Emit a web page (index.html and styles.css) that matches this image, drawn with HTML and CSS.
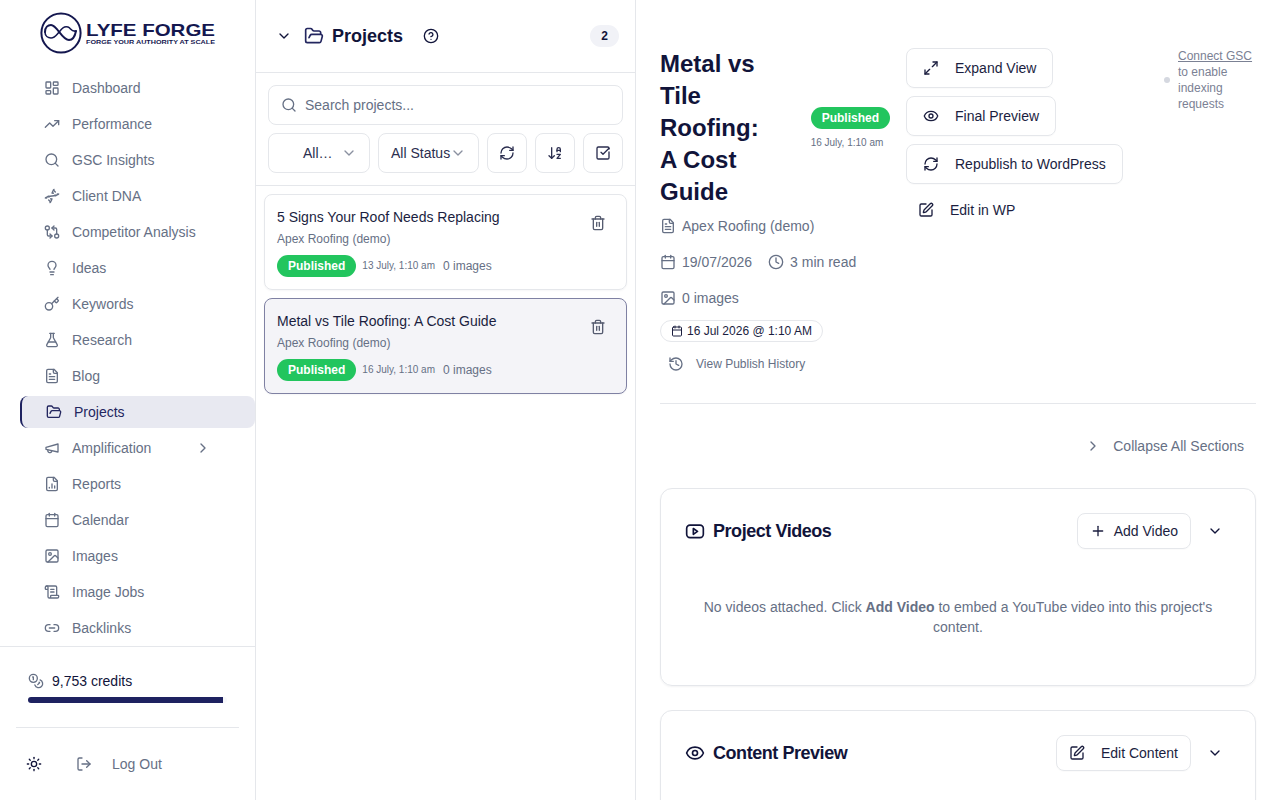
FILE: index.html
```html
<!DOCTYPE html>
<html lang="en">
<head>
<meta charset="utf-8">
<title>Lyfe Forge – Projects</title>
<link rel="stylesheet" href="styles.css">
</head>
<body>
<svg class="defs" xmlns="http://www.w3.org/2000/svg">
<symbol id="i-dash" viewBox="0 0 24 24"><rect x="3" y="3" width="7" height="9" rx="1"/><rect x="14" y="3" width="7" height="5" rx="1"/><rect x="14" y="12" width="7" height="9" rx="1"/><rect x="3" y="16" width="7" height="5" rx="1"/></symbol>
<symbol id="i-trend" viewBox="0 0 24 24"><path d="M16 7h6v6"/><path d="m22 7-8.5 8.5-5-5L2 17"/></symbol>
<symbol id="i-search" viewBox="0 0 24 24"><circle cx="11" cy="11" r="8"/><path d="m21 21-4.3-4.3"/></symbol>
<symbol id="i-dna" viewBox="0 0 24 24"><path d="m10 16 1.5 1.5"/><path d="m14 8-1.5-1.5"/><path d="M15 2c-1.798 1.998-2.518 3.995-2.807 5.993"/><path d="m16.5 10.5 1 1"/><path d="m17 6-2.891-2.891"/><path d="M2 15c6.667-6 13.333 0 20-6"/><path d="m20 9 .891.891"/><path d="M3.109 14.109 4 15"/><path d="m6.5 12.5 1 1"/><path d="m7 18 2.891 2.891"/><path d="M9 22c1.798-1.998 2.518-3.995 2.807-5.993"/></symbol>
<symbol id="i-compare" viewBox="0 0 24 24"><circle cx="5" cy="6" r="3"/><path d="M12 6h5a2 2 0 0 1 2 2v7"/><path d="m15 9-3-3 3-3"/><circle cx="19" cy="18" r="3"/><path d="M12 18H7a2 2 0 0 1-2-2V9"/><path d="m9 15 3 3-3 3"/></symbol>
<symbol id="i-bulb" viewBox="0 0 24 24"><path d="M15 14c.2-1 .7-1.7 1.5-2.5 1-.9 1.5-2.2 1.5-3.5A6 6 0 0 0 6 8c0 1 .2 2.2 1.5 3.5.7.7 1.3 1.5 1.5 2.5"/><path d="M9 18h6"/><path d="M10 22h4"/></symbol>
<symbol id="i-key" viewBox="0 0 24 24"><path d="m15.5 7.5 2.3 2.3a1 1 0 0 0 1.4 0l2.1-2.1a1 1 0 0 0 0-1.4L19 4"/><path d="m21 2-9.6 9.6"/><circle cx="7.5" cy="15.5" r="5.5"/></symbol>
<symbol id="i-flask" viewBox="0 0 24 24"><path d="M14 2v6a2 2 0 0 0 .245.96l5.51 10.08A2 2 0 0 1 18 22H6a2 2 0 0 1-1.755-2.96l5.51-10.08A2 2 0 0 0 10 8V2"/><path d="M6.453 15h11.094"/><path d="M8.5 2h7"/></symbol>
<symbol id="i-file" viewBox="0 0 24 24"><path d="M15 2H6a2 2 0 0 0-2 2v16a2 2 0 0 0 2 2h12a2 2 0 0 0 2-2V7Z"/><path d="M14 2v4a2 2 0 0 0 2 2h4"/><path d="M10 9H8"/><path d="M16 13H8"/><path d="M16 17H8"/></symbol>
<symbol id="i-folder" viewBox="0 0 24 24"><path d="m6 14 1.5-2.9A2 2 0 0 1 9.24 10H20a2 2 0 0 1 1.94 2.5l-1.54 6a2 2 0 0 1-1.95 1.5H4a2 2 0 0 1-2-2V5a2 2 0 0 1 2-2h3.9a2 2 0 0 1 1.69.9l.81 1.2a2 2 0 0 0 1.67.9H18a2 2 0 0 1 2 2v2"/></symbol>
<symbol id="i-mega" viewBox="0 0 24 24"><path d="m3 11 18-5v12L3 14v-3z"/><path d="M11.6 16.8a3 3 0 1 1-5.8-1.6"/></symbol>
<symbol id="i-report" viewBox="0 0 24 24"><path d="M15 2H6a2 2 0 0 0-2 2v16a2 2 0 0 0 2 2h12a2 2 0 0 0 2-2V7Z"/><path d="M14 2v4a2 2 0 0 0 2 2h4"/><path d="M8 18v-1"/><path d="M12 18v-6"/><path d="M16 18v-3"/></symbol>
<symbol id="i-cal" viewBox="0 0 24 24"><path d="M8 2v4"/><path d="M16 2v4"/><rect x="3" y="4" width="18" height="18" rx="2"/><path d="M3 10h18"/></symbol>
<symbol id="i-image" viewBox="0 0 24 24"><rect x="3" y="3" width="18" height="18" rx="2"/><circle cx="9" cy="9" r="2"/><path d="m21 15-3.086-3.086a2 2 0 0 0-2.828 0L6 21"/></symbol>
<symbol id="i-scroll" viewBox="0 0 24 24"><path d="M15 12h-5"/><path d="M15 8h-5"/><path d="M19 17V5a2 2 0 0 0-2-2H4"/><path d="M8 21h12a2 2 0 0 0 2-2v-1a1 1 0 0 0-1-1H11a1 1 0 0 0-1 1v1a2 2 0 1 1-4 0V5a2 2 0 1 0-4 0v2a1 1 0 0 0 1 1h3"/></symbol>
<symbol id="i-link" viewBox="0 0 24 24"><path d="M9 17H7A5 5 0 0 1 7 7h2"/><path d="M15 7h2a5 5 0 1 1 0 10h-2"/><path d="M8 12h8"/></symbol>
<symbol id="i-coins" viewBox="0 0 24 24"><circle cx="8" cy="8" r="6"/><path d="M18.09 10.37A6 6 0 1 1 10.34 18"/><path d="M7 6h1v4"/><path d="m16.71 13.88.7.71-2.82 2.82"/></symbol>
<symbol id="i-sun" viewBox="0 0 24 24"><circle cx="12" cy="12" r="4"/><path d="M12 2v2"/><path d="M12 20v2"/><path d="m4.93 4.93 1.41 1.41"/><path d="m17.66 17.66 1.41 1.41"/><path d="M2 12h2"/><path d="M20 12h2"/><path d="m6.34 17.66-1.41 1.41"/><path d="m19.07 4.93-1.41 1.41"/></symbol>
<symbol id="i-logout" viewBox="0 0 24 24"><path d="M9 21H5a2 2 0 0 1-2-2V5a2 2 0 0 1 2-2h4"/><path d="m16 17 5-5-5-5"/><path d="M21 12H9"/></symbol>
<symbol id="i-right" viewBox="0 0 24 24"><path d="m9 18 6-6-6-6"/></symbol>
<symbol id="i-down" viewBox="0 0 24 24"><path d="m6 9 6 6 6-6"/></symbol>
<symbol id="i-help" viewBox="0 0 24 24"><circle cx="12" cy="12" r="10"/><path d="M9.09 9a3 3 0 0 1 5.83 1c0 2-3 3-3 3"/><path d="M12 17h.01"/></symbol>
<symbol id="i-refresh" viewBox="0 0 24 24"><path d="M3 12a9 9 0 0 1 9-9 9.75 9.75 0 0 1 6.74 2.74L21 8"/><path d="M21 3v5h-5"/><path d="M21 12a9 9 0 0 1-9 9 9.75 9.75 0 0 1-6.74-2.74L3 16"/><path d="M8 16H3v5"/></symbol>
<symbol id="i-sort" viewBox="0 0 24 24"><path d="m3 16 4 4 4-4"/><path d="M7 20V4"/><path d="M20 8h-5"/><path d="M15 10V6.5a2.5 2.5 0 0 1 5 0V10"/><path d="M15 14h5l-5 6h5"/></symbol>
<symbol id="i-check" viewBox="0 0 24 24"><path d="M21 10.5V19a2 2 0 0 1-2 2H5a2 2 0 0 1-2-2V5a2 2 0 0 1 2-2h14a2 2 0 0 1 2 2v1"/><path d="m9 11 3 3 9-9"/></symbol>
<symbol id="i-trash" viewBox="0 0 24 24"><path d="M3 6h18"/><path d="M19 6v14c0 1-1 2-2 2H7c-1 0-2-1-2-2V6"/><path d="M8 6V4c0-1 1-2 2-2h4c1 0 2 1 2 2v2"/><path d="M10 11v6"/><path d="M14 11v6"/></symbol>
<symbol id="i-max" viewBox="0 0 24 24"><path d="M15 3h6v6"/><path d="m21 3-7 7"/><path d="m3 21 7-7"/><path d="M9 21H3v-6"/></symbol>
<symbol id="i-eye" viewBox="0 0 24 24"><path d="M2.062 12.348a1 1 0 0 1 0-.696 10.75 10.75 0 0 1 19.876 0 1 1 0 0 1 0 .696 10.75 10.75 0 0 1-19.876 0"/><circle cx="12" cy="12" r="3"/></symbol>
<symbol id="i-pen" viewBox="0 0 24 24"><path d="M12 3H5a2 2 0 0 0-2 2v14a2 2 0 0 0 2 2h14a2 2 0 0 0 2-2v-7"/><path d="M18.375 2.625a1 1 0 0 1 3 3l-9.013 9.014a2 2 0 0 1-.853.505l-2.873.84a.5.5 0 0 1-.62-.62l.84-2.873a2 2 0 0 1 .506-.852z"/></symbol>
<symbol id="i-clock" viewBox="0 0 24 24"><circle cx="12" cy="12" r="10"/><path d="M12 6v6l4 2"/></symbol>
<symbol id="i-history" viewBox="0 0 24 24"><path d="M3 12a9 9 0 1 0 9-9 9.75 9.75 0 0 0-6.74 2.74L3 8"/><path d="M3 3v5h5"/><path d="M12 7v5l4 2"/></symbol>
<symbol id="i-video" viewBox="0 0 24 24"><rect x="2" y="5" width="20" height="15" rx="4"/><path d="m10 9 5 3.500-5 3.500z"/></symbol>
<symbol id="i-plus" viewBox="0 0 24 24"><path d="M5 12h14"/><path d="M12 5v14"/></symbol>
</svg>

<div class="app">
  <aside class="sidebar">
    <div class="logo-wrap">
      <svg class="logo" viewBox="0 0 176 42" xmlns="http://www.w3.org/2000/svg" role="img" aria-label="Lyfe Forge">
        <circle cx="21" cy="21" r="19.6" fill="none" stroke="#14174f" stroke-width="2"/>
        <path d="M5 20C5 15 8 13 11 13C17 13 22 28 29 28C33 28 35 24 36 19" fill="none" stroke="#14174f" stroke-width="2" stroke-linecap="round"/>
        <path d="M5 20C5 24 8 26 11 26C15 26 17 22 20 19C22 16 25 14 28 15C31 16 31 20 36 19" fill="none" stroke="#14174f" stroke-width="1.600" stroke-linecap="round"/>
        <text class="logo-name" x="46" y="24" textLength="129" lengthAdjust="spacingAndGlyphs">LYFE FORGE</text>
        <text class="logo-tag" x="46" y="32" textLength="129" lengthAdjust="spacingAndGlyphs">FORGE YOUR AUTHORITY AT SCALE</text>
      </svg>
    </div>
    <nav class="nav">
      <a class="nav-item"><svg class="ic"><use href="#i-dash"/></svg><span>Dashboard</span></a>
      <a class="nav-item"><svg class="ic"><use href="#i-trend"/></svg><span>Performance</span></a>
      <a class="nav-item"><svg class="ic"><use href="#i-search"/></svg><span>GSC Insights</span></a>
      <a class="nav-item"><svg class="ic"><use href="#i-dna"/></svg><span>Client DNA</span></a>
      <a class="nav-item"><svg class="ic"><use href="#i-compare"/></svg><span>Competitor Analysis</span></a>
      <a class="nav-item"><svg class="ic"><use href="#i-bulb"/></svg><span>Ideas</span></a>
      <a class="nav-item"><svg class="ic"><use href="#i-key"/></svg><span>Keywords</span></a>
      <a class="nav-item"><svg class="ic"><use href="#i-flask"/></svg><span>Research</span></a>
      <a class="nav-item"><svg class="ic"><use href="#i-file"/></svg><span>Blog</span></a>
      <a class="nav-item is-active"><svg class="ic"><use href="#i-folder"/></svg><span>Projects</span></a>
      <a class="nav-item"><svg class="ic"><use href="#i-mega"/></svg><span>Amplification</span><svg class="ic nav-chevron"><use href="#i-right"/></svg></a>
      <a class="nav-item"><svg class="ic"><use href="#i-report"/></svg><span>Reports</span></a>
      <a class="nav-item"><svg class="ic"><use href="#i-cal"/></svg><span>Calendar</span></a>
      <a class="nav-item"><svg class="ic"><use href="#i-image"/></svg><span>Images</span></a>
      <a class="nav-item"><svg class="ic"><use href="#i-scroll"/></svg><span>Image Jobs</span></a>
      <a class="nav-item"><svg class="ic"><use href="#i-link"/></svg><span>Backlinks</span></a>
    </nav>
    <div class="side-foot">
      <div class="credits">
        <div class="credits-row"><svg class="ic"><use href="#i-coins"/></svg><span>9,753 credits</span></div>
        <div class="track"><div class="fill"></div></div>
      </div>
      <div class="foot-actions">
        <svg class="ic sun"><use href="#i-sun"/></svg>
        <a class="logout"><svg class="ic"><use href="#i-logout"/></svg><span>Log Out</span></a>
      </div>
    </div>
  </aside>

  <section class="list-panel">
    <header class="list-head">
      <svg class="ic ink"><use href="#i-down"/></svg>
      <svg class="ic-20 navy"><use href="#i-folder"/></svg>
      <h2 class="list-title">Projects</h2>
      <svg class="ic ink help"><use href="#i-help"/></svg>
      <span class="count">2</span>
    </header>
    <div class="toolbar">
      <label class="search"><svg class="ic"><use href="#i-search"/></svg><span>Search projects...</span></label>
      <div class="filters">
        <div class="select select-client"><span>All…</span><svg class="ic"><use href="#i-down"/></svg></div>
        <div class="select select-status"><span>All Status</span><svg class="ic"><use href="#i-down"/></svg></div>
        <button class="icon-btn"><svg class="ic"><use href="#i-refresh"/></svg></button>
        <button class="icon-btn"><svg class="ic"><use href="#i-sort"/></svg></button>
        <button class="icon-btn"><svg class="ic"><use href="#i-check"/></svg></button>
      </div>
    </div>
    <div class="cards">
      <article class="pcard">
        <div class="pcard-body">
          <div class="pcard-title">5 Signs Your Roof Needs Replacing</div>
          <div class="pcard-client">Apex Roofing (demo)</div>
          <div class="pcard-meta"><span class="badge">Published</span><span class="tiny">13 July, 1:10 am</span><span class="imgs">0 images</span></div>
        </div>
        <button class="trash"><svg class="ic"><use href="#i-trash"/></svg></button>
      </article>
      <article class="pcard is-selected">
        <div class="pcard-body">
          <div class="pcard-title">Metal vs Tile Roofing: A Cost Guide</div>
          <div class="pcard-client">Apex Roofing (demo)</div>
          <div class="pcard-meta"><span class="badge">Published</span><span class="tiny">16 July, 1:10 am</span><span class="imgs">0 images</span></div>
        </div>
        <button class="trash"><svg class="ic"><use href="#i-trash"/></svg></button>
      </article>
    </div>
  </section>

  <main class="detail">
    <header class="detail-head">
      <div class="detail-info">
        <div class="title-row">
          <h1 class="detail-title">Metal vs Tile Roofing: A Cost Guide</h1>
          <div class="status"><span class="badge">Published</span><span class="tiny">16 July, 1:10 am</span></div>
        </div>
        <div class="meta meta-first"><svg class="ic"><use href="#i-file"/></svg><span>Apex Roofing (demo)</span></div>
        <div class="meta"><svg class="ic"><use href="#i-cal"/></svg><span>19/07/2026</span><svg class="ic meta-gap"><use href="#i-clock"/></svg><span>3 min read</span></div>
        <div class="meta"><svg class="ic"><use href="#i-image"/></svg><span>0 images</span></div>
        <div class="pill"><svg class="ic-12"><use href="#i-cal"/></svg><span>16 Jul 2026 @ 1:10 AM</span></div>
        <a class="history"><svg class="ic"><use href="#i-history"/></svg><span>View Publish History</span></a>
      </div>
      <div class="actions">
        <button class="btn"><svg class="ic"><use href="#i-max"/></svg><span>Expand View</span></button>
        <button class="btn"><svg class="ic"><use href="#i-eye"/></svg><span>Final Preview</span></button>
        <button class="btn"><svg class="ic"><use href="#i-refresh"/></svg><span>Republish to WordPress</span></button>
        <button class="btn btn-ghost"><svg class="ic"><use href="#i-pen"/></svg><span>Edit in WP</span></button>
      </div>
      <div class="gsc">
        <span class="dot"></span>
        <p class="gsc-text"><a>Connect GSC</a> to enable indexing requests</p>
      </div>
    </header>

    <div class="collapse-row">
      <button class="collapse"><svg class="ic"><use href="#i-right"/></svg><span>Collapse All Sections</span></button>
    </div>

    <section class="panel">
      <div class="panel-head">
        <svg class="ic-20 ink"><use href="#i-video"/></svg>
        <h3 class="panel-title">Project Videos</h3>
        <button class="btn btn-sm"><svg class="ic"><use href="#i-plus"/></svg><span>Add Video</span></button>
        <button class="chev"><svg class="ic"><use href="#i-down"/></svg></button>
      </div>
      <p class="empty">No videos attached. Click <strong>Add Video</strong> to embed a YouTube video into this project's content.</p>
    </section>

    <section class="panel">
      <div class="panel-head">
        <svg class="ic-20 ink"><use href="#i-eye"/></svg>
        <h3 class="panel-title">Content Preview</h3>
        <button class="btn btn-sm btn-wide"><svg class="ic"><use href="#i-pen"/></svg><span>Edit Content</span></button>
        <button class="chev"><svg class="ic"><use href="#i-down"/></svg></button>
      </div>
      <div class="panel-fill"></div>
    </section>
  </main>
</div>
</body>
</html>
```
FILE: styles.css
```css
* { box-sizing: border-box; }
html, body { margin: 0; height: 100%; }
body {
  font-family: "Liberation Sans", Arial, sans-serif;
  font-size: 14px;
  line-height: 20px;
  color: #11143a;
  background: #fff;
  overflow: hidden;
}
.defs { display: none; }
svg use { fill: none; }
.ic, .ic-12, .ic-20 {
  flex: none;
  fill: none;
  stroke: currentColor;
  stroke-width: 2;
  stroke-linecap: round;
  stroke-linejoin: round;
}
.ic { width: 16px; height: 16px; }
.ic-12 { width: 12px; height: 12px; }
.ic-20 { width: 20px; height: 20px; }
.ink { color: #11143a; }
.navy { color: #23265f; }
button { font: inherit; color: inherit; background: none; border: 0; padding: 0; }

.app { display: flex; height: 800px; }

/* sidebar */
.sidebar {
  width: 256px;
  flex: none;
  display: flex;
  flex-direction: column;
  border-right: 1px solid #e5e7eb;
}
.logo-wrap { height: 70px; padding: 12px 0 0 40px; flex: none; }
.logo { display: block; width: 176px; height: 42px; }
.logo-name { font: 700 17px "Liberation Sans", sans-serif; fill: #14174f; }
.logo-tag { font: 700 5.5px "Liberation Sans", sans-serif; fill: #14174f; }
.nav { height: 576px; flex: none; overflow: hidden; }
.nav-item {
  height: 36px;
  display: flex;
  align-items: center;
  gap: 12px;
  padding-left: 44px;
  color: #667085;
}
.nav-item.is-active {
  height: 32px;
  margin: 2px 0 2px 20px;
  padding-left: 24px;
  border-left: 2px solid #1e2260;
  border-radius: 8px;
  background: #e8e9f1;
  color: #23265f;
}
.nav-chevron { margin-left: 32px; }
.side-foot { flex: 1; border-top: 1px solid #e5e7eb; padding: 24px 16px 0; }
.credits { padding: 0 12px 24px; border-bottom: 1px solid #e5e7eb; }
.credits-row { display: flex; align-items: center; gap: 8px; color: #11143a; }
.credits-row .ic { color: #667085; }
.track { height: 6px; margin-top: 6px; background: #f7f8fb; border-radius: 3px; overflow: hidden; }
.fill { height: 100%; width: 98%; background: #1e2260; }
.foot-actions { display: flex; align-items: center; padding: 26px 0 0 10px; }
.sun { color: #11143a; }
.logout { display: flex; align-items: center; gap: 20px; margin-left: 34px; color: #667085; }

/* list */
.list-panel {
  width: 380px;
  flex: none;
  border-right: 1px solid #e5e7eb;
  display: flex;
  flex-direction: column;
}
.list-head {
  height: 73px;
  flex: none;
  display: flex;
  align-items: center;
  padding: 0 16px 0 20px;
  border-bottom: 1px solid #e5e7eb;
}
.list-head .navy { margin-left: 12px; }
.list-title { margin: 0 0 0 8px; font-size: 18px; line-height: 28px; font-weight: 700; color: #11143a; }
.help { margin-left: 20px; }
.count {
  margin-left: auto;
  min-width: 29px;
  height: 22px;
  border-radius: 11px;
  background: #f1f2f7;
  font-size: 12px;
  font-weight: 700;
  line-height: 22px;
  text-align: center;
}
.toolbar { padding: 12px; border-bottom: 1px solid #e5e7eb; display: flex; flex-direction: column; gap: 8px; }
.search {
  height: 40px;
  display: flex;
  align-items: center;
  gap: 8px;
  padding-left: 12px;
  border: 1px solid #e5e7eb;
  border-radius: 8px;
  color: #667085;
}
.filters { display: flex; gap: 8px; }
.select {
  height: 40px;
  display: flex;
  align-items: center;
  border: 1px solid #e5e7eb;
  border-radius: 8px;
  color: #2b2e4f;
}
.select .ic { color: #8a90a0; }
.select-client { width: 102px; padding-left: 34px; }
.select-client .ic { margin-left: auto; margin-right: 12px; }
.select-status { width: 101px; padding-left: 12px; }
.icon-btn {
  width: 40px;
  height: 40px;
  display: flex;
  align-items: center;
  justify-content: center;
  border: 1px solid #e5e7eb;
  border-radius: 8px;
  color: #2b2e4f;
}
.cards { padding: 8px; display: flex; flex-direction: column; gap: 8px; }
.pcard {
  height: 96px;
  padding: 12px;
  display: flex;
  justify-content: space-between;
  border: 1px solid #e5e7eb;
  border-radius: 8px;
  box-shadow: 0 1px 2px rgba(16, 24, 40, .04);
}
.pcard.is-selected { background: #f4f4f8; border-color: #7f81a3; }
.pcard-title { color: #1b1e3f; }
.pcard-client { margin-top: 4px; font-size: 12px; line-height: 16px; color: #667085; }
.pcard-meta { margin-top: 8px; display: flex; align-items: center; gap: 6px; }
.badge {
  height: 22px;
  padding: 0 11px;
  border-radius: 11px;
  background: #22c55e;
  color: #fff;
  font-size: 12px;
  font-weight: 700;
  line-height: 22px;
  white-space: nowrap;
}
.tiny { font-size: 10px; line-height: 14px; color: #667085; white-space: nowrap; }
.imgs { margin-left: 2px; font-size: 12px; color: #667085; }
.trash {
  width: 32px;
  height: 32px;
  display: flex;
  align-items: center;
  justify-content: center;
  color: #565c70;
}

/* detail */
.detail { flex: 1; min-width: 0; padding: 48px 24px 0; overflow: hidden; }
.detail-head {
  display: flex;
  align-items: flex-start;
  gap: 16px;
  padding-bottom: 23px;
  border-bottom: 1px solid #e5e7eb;
}
.detail-info { width: 230px; flex: none; }
.title-row { display: flex; align-items: center; justify-content: space-between; }
.detail-title {
  width: 110px;
  flex: none;
  margin: 0;
  font-size: 24px;
  line-height: 32px;
  font-weight: 700;
  color: #11143a;
}
.status { display: flex; flex-direction: column; gap: 7px; }
.meta { display: flex; align-items: center; gap: 6px; margin-top: 16px; color: #667085; white-space: nowrap; }
.meta-first { margin-top: 8px; }
.meta-gap { margin-left: 10px; }
.pill {
  display: inline-flex;
  align-items: center;
  gap: 4px;
  height: 22px;
  margin-top: 12px;
  padding: 0 10px;
  border: 1px solid #e5e7eb;
  border-radius: 11px;
  font-size: 12px;
  color: #1b1e3f;
  white-space: nowrap;
}
.history { display: flex; align-items: center; gap: 12px; height: 32px; margin-top: 6px; padding-left: 8px; font-size: 12px; color: #667085; white-space: nowrap; }
.actions { display: flex; flex-direction: column; align-items: flex-start; gap: 8px; }
.btn {
  height: 40px;
  display: flex;
  align-items: center;
  gap: 16px;
  padding: 0 16px;
  border: 1px solid #e5e7eb;
  border-radius: 8px;
  color: #1b1e3f;
  white-space: nowrap;
  box-shadow: 0 1px 1px rgba(16, 24, 40, .02);
}
.btn-ghost { border: 0; padding: 0 12px; box-shadow: none; margin-top: -2px; }
.btn-sm { height: 36px; padding: 0 12px; gap: 8px; margin-left: auto; }
.btn-wide { gap: 16px; }
.gsc { margin-left: auto; width: 92px; flex: none; display: flex; align-items: center; gap: 8px; }
.dot { width: 6px; height: 6px; flex: none; border-radius: 50%; background: #d5d8e0; }
.gsc-text { margin: 0; font-size: 12px; line-height: 16px; color: #7b8194; }
.gsc-text a { text-decoration: underline; }
.collapse-row { display: flex; justify-content: flex-end; padding: 22px 12px 0 0; height: 84px; }
.collapse { display: flex; align-items: center; gap: 12px; height: 40px; color: #667085; }
.panel {
  margin-bottom: 24px;
  border: 1px solid #e5e7eb;
  border-radius: 12px;
  box-shadow: 0 1px 2px rgba(16, 24, 40, .05);
}
.panel-head { display: flex; align-items: center; padding: 24px 24px 0; }
.panel-title { margin: 0 0 0 8px; font-size: 18px; line-height: 28px; font-weight: 700; letter-spacing: -.45px; color: #11143a; }
.chev { width: 32px; height: 36px; margin-left: 8px; display: flex; align-items: center; justify-content: center; color: #11143a; }
.empty { margin: 0; padding: 48px 24px; text-align: center; color: #667085; }
.empty strong { font-weight: 700; }
.panel-fill { height: 120px; }
```
